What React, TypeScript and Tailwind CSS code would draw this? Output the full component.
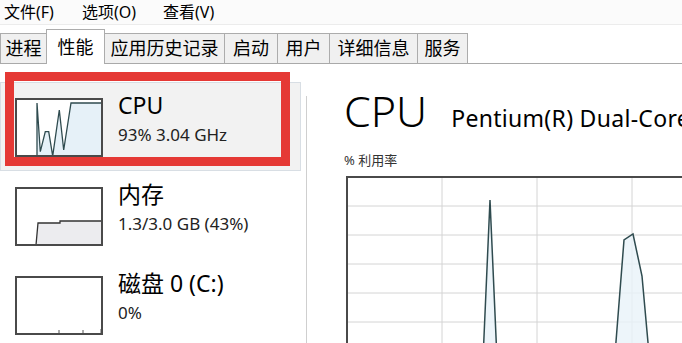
import React from "react";

const tabs = [
  { label: "进程", w: "w-[47px]", active: false },
  { label: "性能", w: "w-[59px]", active: true },
  { label: "应用历史记录", w: "w-[121px]", active: false },
  { label: "启动", w: "w-[54px]", active: false },
  { label: "用户", w: "w-[53px]", active: false },
  { label: "详细信息", w: "w-[89px]", active: false },
  { label: "服务", w: "w-[51px]", active: false },
];

function CpuThumb() {
  const pts = "20,56 20,3 23.3,51.7 28.3,31.7 31.7,31.7 35.7,56 42.3,10 46.7,50 54,3 84,3";
  return (
    <svg width="84" height="55" viewBox="0 0 84 55" className="block">
      <polygon points={`0,55 20,55 ${pts} 84,55`} fill="#e6f1f8" />
      <polyline points={pts} fill="none" stroke="#2f4b4f" strokeWidth="1.3" />
    </svg>
  );
}

function MemThumb() {
  const pts = "19,56 21,34 43,34 43,32 84,32";
  return (
    <svg width="84" height="55" viewBox="0 0 84 55" className="block">
      <polygon points={`${pts} 84,55 19,55`} fill="#ececef" />
      <polyline points={pts} fill="none" stroke="#333" strokeWidth="1.3" />
    </svg>
  );
}

function DiskThumb() {
  return (
    <svg width="84" height="55" viewBox="0 0 84 55" className="block">
      <path d="M42 55 V52 M66 55 V52 M84 55 V51" stroke="#555" strokeWidth="1" />
    </svg>
  );
}

function Item({ thumb, title, sub, selected }: { thumb: React.ReactNode; title: string; sub: string; selected?: boolean }) {
  return (
    <div className={`flex h-[89px] w-[301px] shrink-0 pl-[14px] pt-[15px] ${selected ? "bg-[#f2f2f2] border border-[#d8dee4]" : "border border-transparent"}`}>
      <div className="h-[59px] w-[88px] shrink-0 border-2 border-[#4a4a4a] bg-white">{thumb}</div>
      <div className="ml-[15px] -mt-[6px] flex flex-col">
        <div className="text-[23px] leading-[26px] text-black">{title}</div>
        <div className="mt-[7px] text-[17px] leading-[20px] text-[#222]">{sub}</div>
      </div>
    </div>
  );
}

function MainChart() {
  const p1 = "135.5,170 142,22 148.5,170";
  const p2 = "267.5,170 276,62 285,56 294,98 300.5,170";
  return (
    <svg width="338" height="168" viewBox="0 0 338 168" className="block">
      {[28, 57, 86, 115, 144].map((y) => (
        <line key={y} x1="0" x2="338" y1={y} y2={y} stroke="#d4d4d4" strokeWidth="1" />
      ))}
      {[94, 189, 284].map((x) => (
        <line key={x} x1={x} x2={x} y1="0" y2="168" stroke="#d4d4d4" strokeWidth="1" />
      ))}
      <polygon points={p1} fill="#e8f3f9" fillOpacity="0.8" />
      <polygon points={p2} fill="#e8f3f9" fillOpacity="0.8" />
      <polyline points={p1} fill="none" stroke="#2f4b4f" strokeWidth="1.5" />
      <polyline points={p2} fill="none" stroke="#2f4b4f" strokeWidth="1.5" />
    </svg>
  );
}

export default function App() {
  return (
    <div className="relative h-[343px] w-[682px] overflow-hidden bg-white text-black font-['Noto_Sans','Noto_Sans_CJK_SC',sans-serif]">
      {/* menu */}
      <div className="flex h-[25px] items-center border-b border-[#ececec] bg-[#fbfbfb] pl-[4px] text-[16px]">
        <span className="w-[78px]">文件(F)</span>
        <span className="w-[81px]">选项(O)</span>
        <span>查看(V)</span>
      </div>

      {/* tabs */}
      <div className="flex h-[39px] items-end border-b border-[#a9a9a9]">
        {tabs.map((t, i) =>
          t.active ? (
            <div
              key={t.label}
              className={`${t.w} relative z-10 -mb-px -ml-px flex h-[35px] items-center justify-center border border-b-0 border-[#acacac] bg-white text-[18px]`}
            >
              {t.label}
            </div>
          ) : (
            <div
              key={t.label}
              className={`${t.w} ${i === 0 ? "" : "-ml-px"} flex h-[30px] items-center justify-center border border-b-0 border-[#acacac] bg-[#f0f0f0] text-[18px]`}
            >
              {t.label}
            </div>
          )
        )}
      </div>

      {/* body */}
      <div className="flex h-[279px]">
        <div className="relative flex w-[306px] shrink-0 flex-col pt-[18px]">
          <Item thumb={<CpuThumb />} title="CPU" sub="93% 3.04 GHz" selected />
          <Item thumb={<MemThumb />} title="内存" sub="1.3/3.0 GB (43%)" />
          <Item thumb={<DiskThumb />} title="磁盘 0 (C:)" sub="0%" />
          {/* red annotation box */}
          <div className="pointer-events-none absolute left-[5px] top-[8px] h-[94px] w-[285px] border-[9px] border-[#e53935]" />
        </div>
        <div className="mt-[32px] w-px shrink-0 bg-[#cfcfcf]" />
        <div className="flex shrink-0 flex-col pl-[37px] pt-[25px]">
          <div className="flex items-baseline whitespace-nowrap">
            <span className="text-[43px] font-light leading-none">CPU</span>
            <span className="ml-[24px] text-[23px] tracking-[0.3px] leading-none">Pentium(R) Dual-Core CPU</span>
          </div>
          <div className="mt-[20px] text-[13px] leading-[16px] text-[#333]">% 利用率</div>
          <div className="ml-[2px] mt-[8px] w-[340px] border-l-2 border-t-2 border-[#4a4a4a]">
            <MainChart />
          </div>
        </div>
      </div>
    </div>
  );
}
